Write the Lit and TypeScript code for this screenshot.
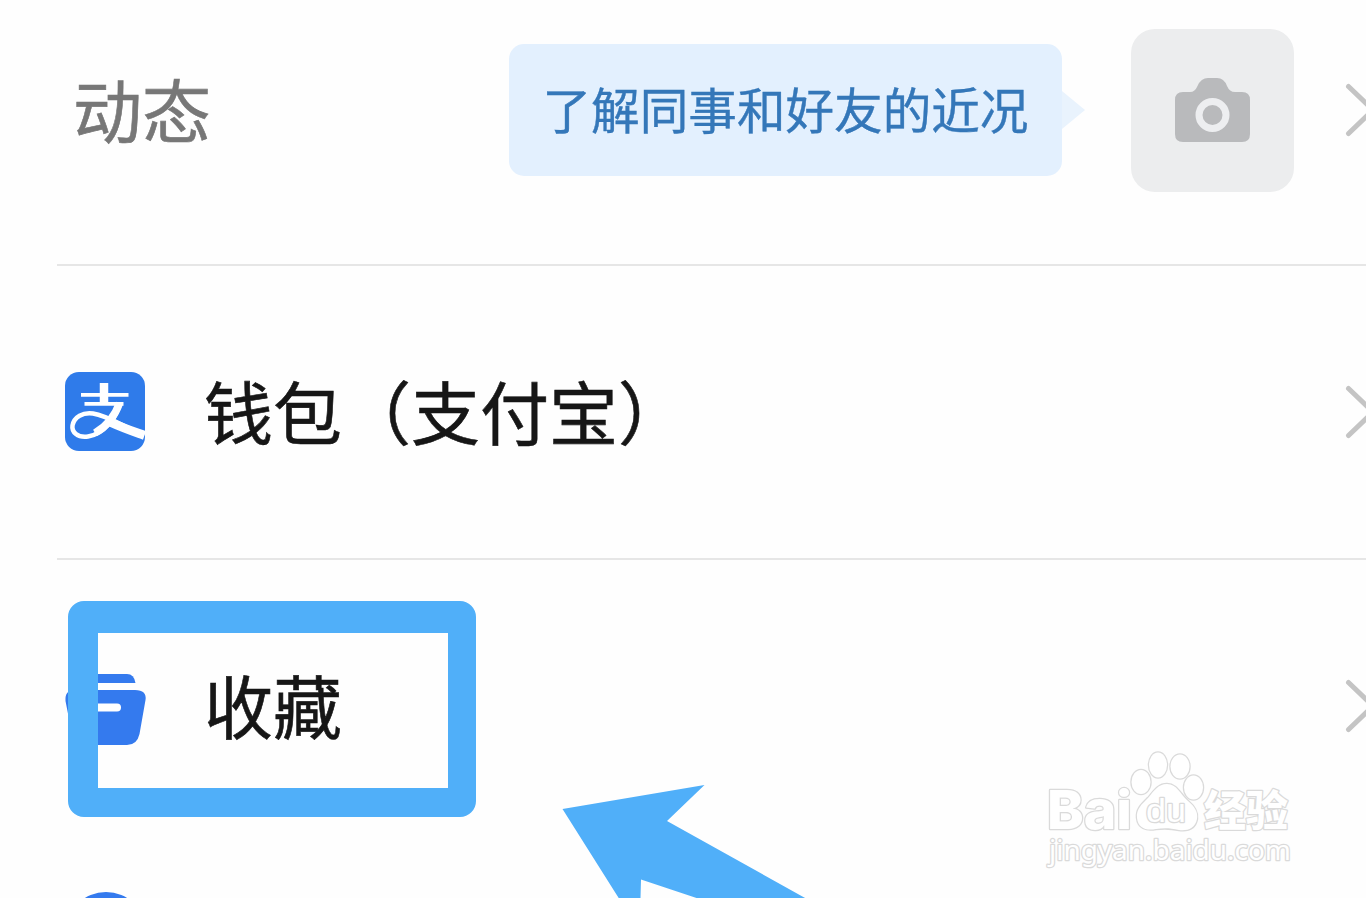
import { LitElement, html, css, svg } from "lit";
import { customElement, property } from "lit/decorators.js";

const walletIcon = svg`
  <rect width="80" height="79" rx="14" fill="#2f7bea" />
  <g fill="none" stroke="#fff">
    <path d="M16 22.8H63.500M19.500 31.800H58.500" stroke-width="3.800" />
    <path d="M39 11V32" stroke-width="8.500" />
    <path d="M55.500 31C51 45 40 62 23 64.500C12.500 66 6.500 60 7.500 53.500C9 45 18 40 28 41.500C45 44.500 56 54 79 62.500" stroke-width="4.500" />
    <path d="M46 50.500C58 56 67 59 79.500 63.500" stroke-width="9" />
    <path d="M54.500 31C50 44 42 54 30 61" stroke-width="7.500" />
  </g>
`;

const folderIcon = svg`
  <path d="M10 17V15Q10 8 18 8H62Q69 8 70.500 17Z" fill="#347aee" />
  <path d="M10 24H70Q82 24 80.500 34L74.500 68Q72 79 62 79H19Q9 79 7 68L.5 35Q-.5 24 10 24Z" fill="#347aee" />
  <path d="M26 41.500H52" stroke="#fff" stroke-width="8" stroke-linecap="round" />
`;

const roundIcon = svg`
  <circle cx="41" cy="40" r="40" fill="#347aee" />
`;

@customElement("menu-row")
export class MenuRow extends LitElement {
  @property() label = "";
  @property({ attribute: false }) icon: unknown = null;

  static styles = css`
    :host {
      display: flex;
      align-items: center;
      box-sizing: border-box;
      flex: none;
      height: 294px;
      border-bottom: 2px solid #e6e6e6;
    }

    .icon {
      flex: none;
      width: 82px;
      height: 80px;
      margin-left: 8px;
      overflow: visible;
    }

    .label {
      margin-left: 57px;
      padding-bottom: 5px;
      font-size: 69px;
      line-height: 80px;
      color: #161616;
      white-space: nowrap;
      -webkit-text-stroke: 0.600px #161616;
    }

    .label.plain {
      margin-left: 16px;
      color: #777;
      -webkit-text-stroke-color: #777;
    }

    .end {
      display: flex;
      align-items: center;
      margin-left: auto;
    }

    .chevron {
      flex: none;
      width: 32px;
      height: 56px;
      margin-right: -10px;
    }
  `;

  render() {
    return html`
      ${this.icon ? html`<svg class="icon" viewBox="0 0 82 80">${this.icon}</svg>` : ""}
      <span class="label ${this.icon ? "" : "plain"}">${this.label}</span>
      <div class="end">
        <slot></slot>
        <svg class="chevron" viewBox="0 0 32 56">
          <path
            d="M4.500 4.500L29 28L4.500 51.500"
            fill="none"
            stroke="#c4c4c4"
            stroke-width="5"
            stroke-linecap="round"
          />
        </svg>
      </div>
    `;
  }
}

@customElement("baidu-mark")
export class BaiduMark extends LitElement {
  static styles = css`
    :host {
      display: block;
      width: 260px;
      height: 126px;
    }

    svg {
      display: block;
      width: 100%;
      height: 100%;
    }

    .mark {
      fill: #fff;
      stroke: #dadada;
      stroke-width: 2.500;
      stroke-linejoin: round;
      paint-order: stroke;
    }

    .latin {
      font: 800 54px Inter, sans-serif;
    }

    .du {
      font: 34px "Liberation Sans", sans-serif;
    }

    .han {
      font: 900 42px "Noto Sans CJK SC", sans-serif;
    }

    .site {
      font: 27px "Noto Sans", sans-serif;
    }
  `;

  render() {
    return html`
      <svg viewBox="0 0 260 126">
        <text class="mark latin" x="7" y="77.500" textLength="85" lengthAdjust="spacingAndGlyphs">Bai</text>
        <g class="mark">
          <ellipse cx="101" cy="31" rx="9.500" ry="12" />
          <ellipse cx="118" cy="14" rx="9" ry="12.500" />
          <ellipse cx="140" cy="15.500" rx="9.500" ry="12" />
          <ellipse cx="153.500" cy="36.500" rx="9.500" ry="12" />
          <path d="M127 33C137 33 140 43 148 50C155 56 158 61 157 68C155 78 147 80 139 79C130 77 124 77 116 78C106 80 98 77 97 67C96 58 102 53 108 47C114 40 118 33 127 33Z" />
        </g>
        <text class="mark du" x="106" y="71" textLength="40" lengthAdjust="spacingAndGlyphs">du</text>
        <text class="mark han" x="164" y="75" textLength="84" lengthAdjust="spacingAndGlyphs">经验</text>
        <text class="mark site" x="9" y="109" textLength="242" lengthAdjust="spacingAndGlyphs">jingyan.baidu.com</text>
      </svg>
    `;
  }
}

@customElement("app-root")
export class AppRoot extends LitElement {
  static styles = css`
    :host {
      display: block;
      position: relative;
      height: 898px;
      overflow: hidden;
      background: #fefefe;
      font-family: "Noto Sans CJK SC", sans-serif;
    }

    .list {
      display: flex;
      flex-direction: column;
      padding-left: 57px;
    }

    .first {
      height: 266px;
      padding-bottom: 44px;
    }

    .open {
      border-bottom-color: transparent;
    }

    .last {
      height: 156px;
      border-bottom: none;
    }

    .bubble {
      position: relative;
      display: flex;
      align-items: center;
      justify-content: center;
      box-sizing: border-box;
      width: 553px;
      height: 132px;
      margin-right: 69px;
      padding-bottom: 5px;
      border-radius: 15px;
      background: #e3f0fe;
      color: #3477b9;
      font-size: 48.600px;
      white-space: nowrap;
      -webkit-text-stroke: 0.400px #3477b9;
    }

    .bubble::after {
      content: "";
      position: absolute;
      left: 100%;
      top: 47px;
      border: 19px solid transparent;
      border-left: 23px solid #e9f3fd;
      border-right: none;
    }

    .camera {
      display: flex;
      align-items: center;
      justify-content: center;
      width: 163px;
      height: 163px;
      margin-right: 50px;
      border-radius: 24px;
      background: #ecedee;
    }

    .camera svg {
      width: 75px;
      height: 66px;
    }

    .frame {
      position: absolute;
      left: 68px;
      top: 601px;
      box-sizing: border-box;
      width: 408px;
      height: 216px;
      border: solid #50aff9;
      border-width: 32px 28px 29px 30px;
      border-radius: 16px;
    }

    .arrow {
      position: absolute;
      left: 562px;
      top: 784px;
      width: 250px;
      height: 114px;
    }

    .watermark {
      position: absolute;
      left: 1040px;
      top: 751px;
    }
  `;

  render() {
    return html`
      <div class="list">
        <menu-row class="first" label="动态">
          <div class="bubble">了解同事和好友的近况</div>
          <div class="camera">
            <svg viewBox="0 0 75 66">
              <path
                d="M8 15H15Q20 15 22.500 9Q26 1 33 1H42Q49 1 52 9Q54.500 15 60 15H67Q75 15 75 23V57Q75 65 67 65H8Q0 65 0 57V23Q0 15 8 15Z"
                fill="#b9babc"
              />
              <circle cx="37.500" cy="38" r="13.500" fill="none" stroke="#edeef0" stroke-width="7" />
            </svg>
          </div>
        </menu-row>
        <menu-row label="钱包（支付宝）" .icon=${walletIcon}></menu-row>
        <menu-row class="open" label="收藏" .icon=${folderIcon}></menu-row>
        <menu-row class="last" .icon=${roundIcon}></menu-row>
      </div>
      <div class="frame"></div>
      <svg class="arrow" viewBox="0 0 250 114">
        <path d="M.5 25L142.500 1L105 37L244 114.500H136L79 95.500L78.500 114.500H57Z" fill="#50aff9" />
      </svg>
      <baidu-mark class="watermark"></baidu-mark>
    `;
  }
}
